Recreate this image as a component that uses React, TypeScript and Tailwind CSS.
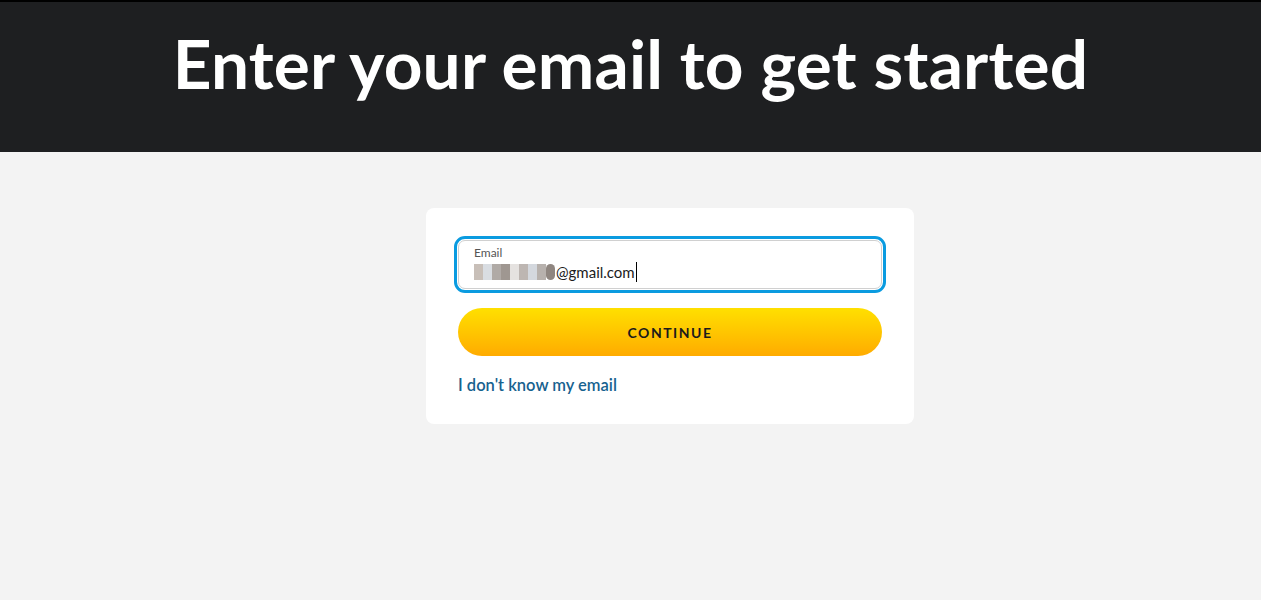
const App = () => {
  return (
    <div className="min-h-[600px] bg-[#f3f3f3] font-['Lato',sans-serif]">
      <header className="h-[152px] bg-[#1e1f21] border-t-2 border-black flex items-center justify-center">
        <h1 className="text-white text-[67.5px] font-bold tracking-[0.2px] leading-none -mt-[28px]">
          Enter your email to get started
        </h1>
      </header>

      <main className="flex justify-center pt-[56px] pl-[79px]">
        <div className="w-[488px] bg-white rounded-lg px-[32px] pt-[32px] pb-[29px]">
          <div className="rounded-[7px] border border-[#d0d0d0] outline-[3px] outline-solid outline-[#0a9be0] outline-offset-[1px] h-[49px] px-[15px] pt-[4px]">
            <div className="text-[12px] text-[#555] leading-[15px]">Email</div>
            <div className="flex items-center h-[24px] text-[15px] text-[#1b1b1b]">
              <span className="flex h-[16px] mr-px">
                <span className="w-[9px] bg-[#c8bfb8]" />
                <span className="w-[9px] bg-[#d9dde2]" />
                <span className="w-[9px] bg-[#b0aaa6]" />
                <span className="w-[9px] bg-[#9f9791]" />
                <span className="w-[9px] bg-[#e5e2e0]" />
                <span className="w-[9px] bg-[#bdb6b2]" />
                <span className="w-[9px] bg-[#d4d8de]" />
                <span className="w-[9px] bg-[#b7b1ad]" />
                <span className="w-[9px] bg-[#8f8680] rounded-full" />
              </span>
              <span>@gmail.com</span>
              <span className="w-px h-[20px] bg-black ml-px" />
            </div>
          </div>

          <button className="mt-[19px] w-full h-[48px] rounded-full bg-gradient-to-b from-[#ffe000] to-[#ffab00] text-[#1b1b1b] text-[14px] font-bold tracking-[1.5px]">
            CONTINUE
          </button>

          <a href="#" className="block mt-[19px] text-[16.5px] font-semibold text-[#17628f] leading-[20px]">
            I don't know my email
          </a>
        </div>
      </main>
    </div>
  );
};

export default App;
